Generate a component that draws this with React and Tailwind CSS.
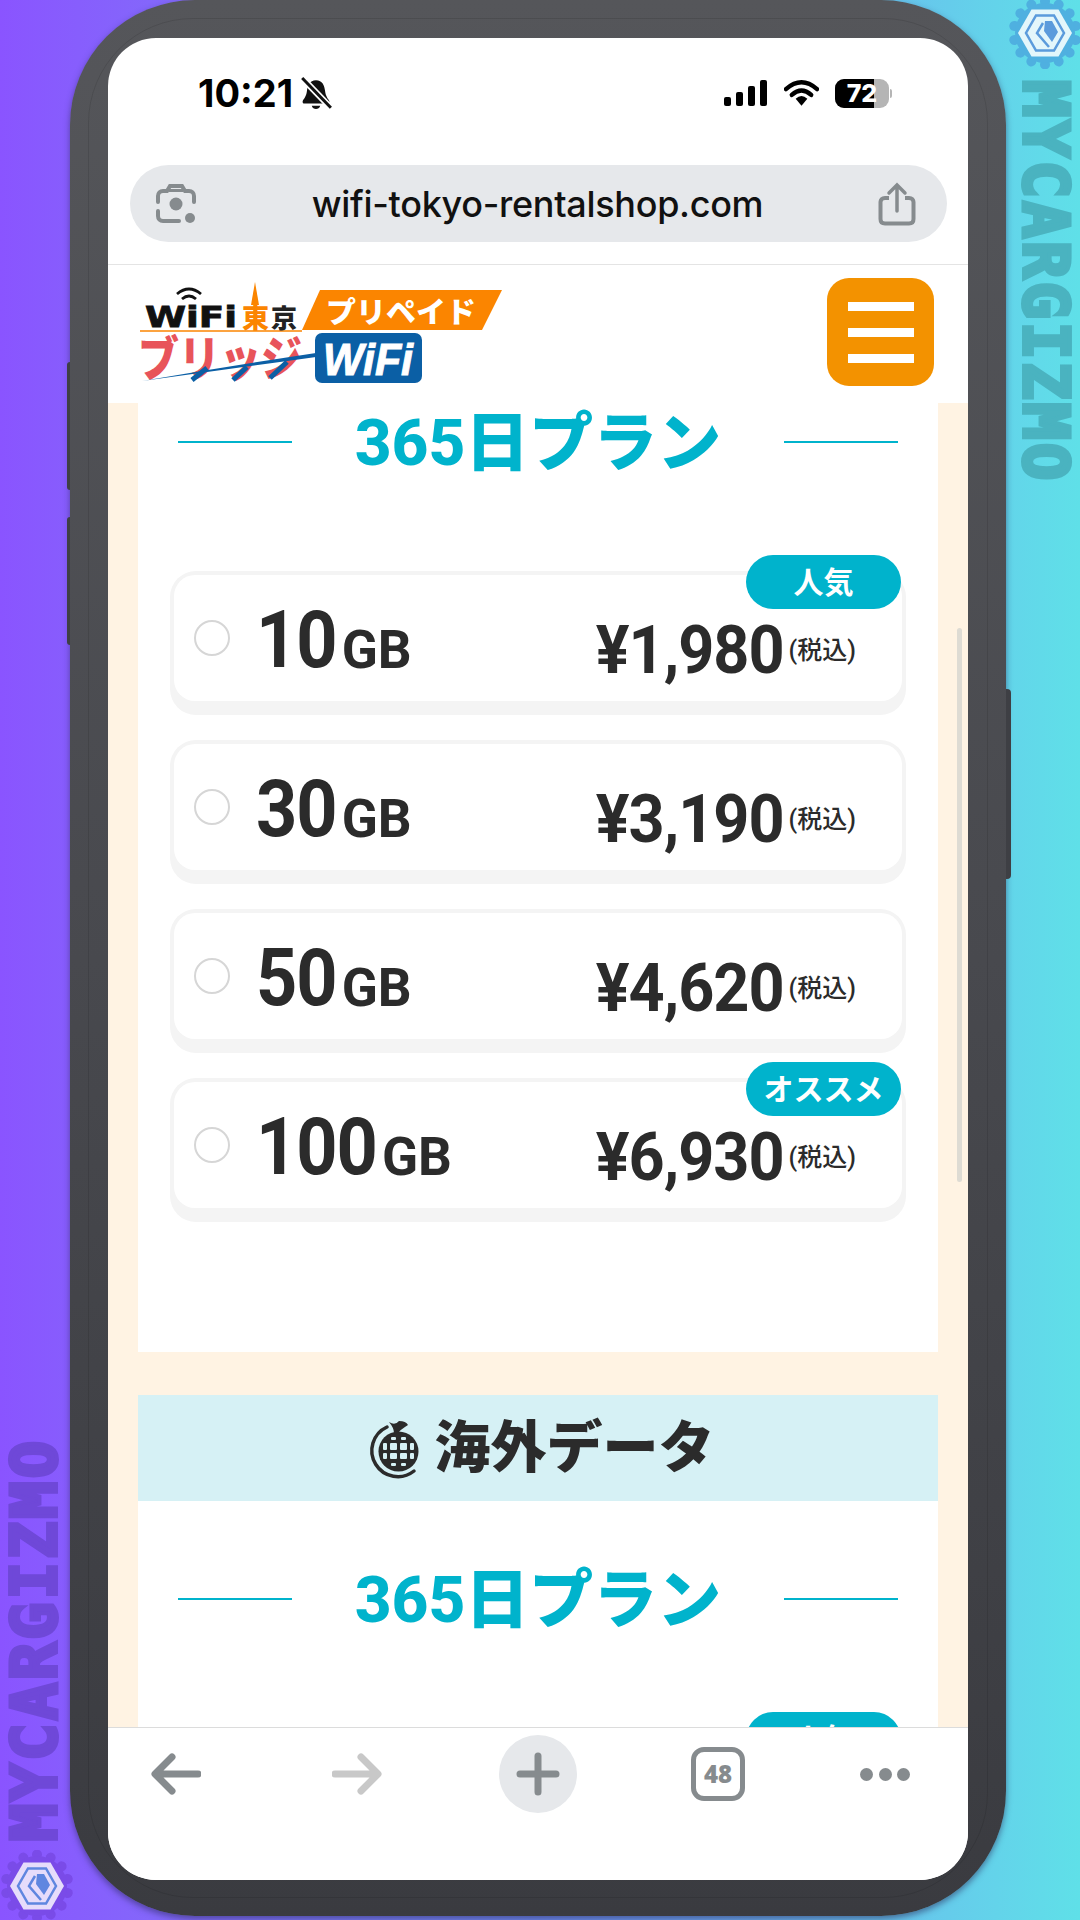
import React from 'react';

function HexBadge({ gear, hex, inner }) {
  const teeth = Array.from({ length: 14 }, (_, i) => (i * 360) / 14);
  return (
    <svg viewBox="0 0 72 72" className="w-[72px] h-[72px]">
      {teeth.map((a) => (
        <circle key={a} cx="36" cy="4.500" r="5" fill={gear} transform={`rotate(${a} 36 36)`} />
      ))}
      <circle cx="36" cy="36" r="30" fill={gear} />
      <path d="M63 36 49.500 12.500H22.500L9 36 22.500 59.500H49.500Z" fill={hex} />
      <path d="M55 36 45 18.500H27L17 36 27 53.500H45Z" fill="none" stroke={inner} strokeWidth="2.500" />
      <path d="M36 24H43L49 35 43 45 35 34Z" fill={inner} />
      <path d="M40 50 28 36 34 26" fill="none" stroke={inner} strokeWidth="2.500" />
    </svg>
  );
}

function Logo() {
  const cjk = "'Noto Sans CJK JP', sans-serif";
  return (
    <svg viewBox="0 0 380 120" className="w-[380px] h-[120px] shrink-0">
      <path d="M190 15H372L352 55H172Z" fill="#fb8500" />
      <path d="M10 56H172" stroke="#fb8500" strokeWidth="1.500" />
      <text x="15" y="52" fontFamily="'DejaVu Sans', sans-serif" fontWeight="700" fontSize="28" textLength="92" lengthAdjust="spacingAndGlyphs" stroke="#111" strokeWidth="0.8" fill="#111">WiFi</text>
      <path d="M47 19Q59 9 71 19M52 24Q59 18 66 24" fill="none" stroke="#111" strokeWidth="2.800" />
      <path d="M125 7 129 30H121Z" fill="#fb8500" />
      <text x="112" y="53" fontFamily={cjk} fontWeight="900" fontSize="27" fill="#fb8500">東</text>
      <text x="141" y="53" fontFamily={cjk} fontWeight="900" fontSize="26" fill="#222">京</text>
      <text x="196" y="48" fontFamily={cjk} fontWeight="900" fontSize="29" textLength="150" lengthAdjust="spacingAndGlyphs" fill="#fff">プリペイド</text>
      <text x="8" y="101" fontFamily={cjk} fontWeight="900" fontSize="48" textLength="164" lengthAdjust="spacingAndGlyphs" fill="#e8545a">ブリッジ</text>
      <path d="M12 106Q100 91 186 78V82Q100 94 12 106Z" fill="#0b5fa5" />
      <path d="M62 105 77 93M103 105 117 92M140 103 157 87" stroke="#0b5fa5" strokeWidth="5" fill="none" />
      <rect x="185" y="58" width="107" height="50" rx="7" fill="#0b5fa5" />
      <text x="193" y="100" fontFamily="'Liberation Sans', sans-serif" fontStyle="italic" fontWeight="700" fontSize="44" textLength="90" lengthAdjust="spacingAndGlyphs" stroke="#fff" strokeWidth="1" fill="#fff">WiFi</text>
    </svg>
  );
}

function Heading() {
  return (
    <div className="h-[78px] flex items-center justify-between px-[40px]">
      <div className="w-[114px] h-[2px] bg-[#00b3cc]" />
      <div className="text-[64px] leading-none font-extrabold text-[#00b3cc] translate-y-[2px]">365日プラン</div>
      <div className="w-[114px] h-[2px] bg-[#00b3cc]" />
    </div>
  );
}

function PlanCard({ gb, price, badge }) {
  return (
    <div className="relative h-[144px] rounded-[26px] bg-[#f4f4f4] pt-[4px] px-[4px] pb-[14px]">
      <div className="h-full rounded-[21px] bg-white flex items-center pl-[20px] pr-[46px]">
        <div className="w-[36px] h-[36px] rounded-full border-2 border-[#d6d6d6] bg-white shrink-0" />
        <div className="flex-1 flex items-baseline ml-[26px] text-[#2b2b2b] font-bold">
          <span className="inline-block origin-[50%_85%] scale-y-[1.11] translate-y-[5px] text-[72px] leading-none tracking-[-1px]">{gb}</span>
          <span className="text-[53px] leading-none ml-[5px] translate-y-[6px]">GB</span>
          <span className="inline-block ml-auto origin-[50%_85%] scale-y-[1.07] translate-y-[11px] text-[63px] leading-none tracking-[-1px]">{price}</span>
          <span className="text-[25px] leading-none font-medium ml-[5px] -translate-y-[3px]">(税込)</span>
        </div>
      </div>
      {badge && (
        <div className="absolute top-[-16px] right-[5px] w-[155px] h-[54px] rounded-full bg-[#00b3cc] text-white text-[30px] font-bold flex items-center justify-center">
          {badge}
        </div>
      )}
    </div>
  );
}

function Plans({ plans }) {
  return (
    <div className="mt-[90px] flex flex-col gap-[25px] px-[32px]">
      {plans.map((p) => (
        <PlanCard key={p.gb} {...p} />
      ))}
    </div>
  );
}

const plans = [
  { gb: '10', price: '¥1,980', badge: '人気' },
  { gb: '30', price: '¥3,190' },
  { gb: '50', price: '¥4,620' },
  { gb: '100', price: '¥6,930', badge: 'オススメ' },
];

function GlobeIcon() {
  const cells = [
    [29, 24, 5, 3], [39, 24, 5, 3],
    [21, 30, 4, 7], [28, 30, 7, 7], [38, 30, 7, 7], [48, 30, 4, 7],
    [21, 40, 4, 6], [28, 40, 7, 6], [38, 40, 7, 6], [48, 40, 4, 6],
    [29, 50, 5, 3], [39, 50, 5, 3],
  ];
  return (
    <svg viewBox="0 0 70 70" className="w-[70px] h-[70px] shrink-0">
      <path d="M25 14A26 26 0 1 0 52 58" fill="none" stroke="#2b2b2b" strokeWidth="3.500" strokeLinecap="round" />
      <path d="M27 9Q33 13 37 8 44 8 46 12 38 17 36 20H32Q32 15 27 9Z" fill="#2b2b2b" />
      <circle cx="36.500" cy="38.500" r="20" fill="#2b2b2b" />
      {cells.map(([x, y, w, h]) => (
        <rect key={`${x}-${y}`} x={x} y={y} width={w} height={h} rx="1" fill="#d6f1f5" />
      ))}
    </svg>
  );
}

export default function App() {
  return (
    <div className="relative w-[1080px] h-[1920px] overflow-hidden bg-gradient-to-r from-[#8a54ff] via-[#6f8cf0] to-[#5fe0e8] pl-[70px] font-[family-name:Roboto,'Noto_Sans_CJK_JP',sans-serif]">
      {/* watermarks */}
      <div className="absolute left-[1020px] top-[80px] [writing-mode:vertical-rl] w-[50px] text-[62px] leading-[50px] font-bold tracking-[3px] text-[#4ab3c0] [-webkit-text-stroke:4px_#4ab3c0] font-[family-name:'DejaVu_Sans_Mono',monospace]">
        MYCARGIZMO
      </div>
      <div className="absolute left-[1009px] top-[-3px]">
        <HexBadge gear="#4fb0e0" hex="#e3f6fb" inner="#5b9bdc" />
      </div>
      <div className="absolute left-[10px] top-[1438px] [writing-mode:vertical-rl] rotate-180 w-[50px] text-[62px] leading-[50px] font-bold tracking-[3px] text-[#6f48d8] [-webkit-text-stroke:4px_#6f48d8] font-[family-name:'DejaVu_Sans_Mono',monospace]">
        MYCARGIZMO
      </div>
      <div className="absolute left-[1px] top-[1850px]">
        <HexBadge gear="#7a4be8" hex="#e6dcfb" inner="#5f86e0" />
      </div>

      {/* phone */}
      <div className="relative w-[936px] h-[1916px] rounded-[125px] bg-gradient-to-b from-[#55565a] via-[#48494e] to-[#3a3b40] pt-[38px] pl-[38px] pr-[38px] pb-[36px] shadow-[0_3px_6px_rgba(40,40,90,0.55)]">
        <div className="absolute inset-[18px] rounded-[105px] border border-black/10" />
        <div className="absolute left-[-3px] top-[362px] w-[3px] h-[128px] bg-[#3e3f44] rounded-l-sm" />
        <div className="absolute left-[-3px] top-[517px] w-[3px] h-[128px] bg-[#3e3f44] rounded-l-sm" />
        <div className="absolute right-[-5px] top-[689px] w-[5px] h-[190px] bg-[#3e3f44] rounded-r-sm" />

        <div className="relative w-full h-full rounded-[48px] overflow-hidden bg-white flex flex-col">
          {/* status bar */}
          <div className="h-[127px] shrink-0 flex items-start pt-[36px] pl-[90px] pr-[76px]">
            <span className="text-[38px] leading-[38px] font-bold text-black font-[family-name:Inter,sans-serif]">10:21</span>
            <svg viewBox="0 0 32 32" className="w-[34px] h-[34px] ml-[6px] mt-[3px]">
              <path d="M16 3C10 3 8 8 7.500 13 7 18 5 20 3.500 22.500 3 24 4 25 5 25H27C28 25 29 24 28.500 22.500 27 20 25 18 24.500 13 24 8 22 3 16 3ZM12 27H20C19 31 13 31 12 27Z" fill="#111" />
              <path d="M3 1 30 29" stroke="#fff" strokeWidth="6" />
              <path d="M3 1 30 29" stroke="#111" strokeWidth="2.800" />
            </svg>
            <div className="ml-auto flex items-center gap-[16px] h-[38px]">
              <svg viewBox="0 0 44 26" className="w-[44px] h-[26px]">
                <rect x="0" y="17" width="7" height="9" rx="2" fill="#000" />
                <rect x="12" y="12" width="7" height="14" rx="2" fill="#000" />
                <rect x="24" y="6" width="7" height="20" rx="2" fill="#000" />
                <rect x="36" y="0" width="7" height="26" rx="2" fill="#000" />
              </svg>
              <svg viewBox="0 0 36 26" className="w-[35px] h-[26px]">
                <path d="M2 9Q18 -5 34 9" fill="none" stroke="#000" strokeWidth="4.500" strokeLinecap="round" />
                <path d="M8 15Q18 6 28 15" fill="none" stroke="#000" strokeWidth="4.500" strokeLinecap="round" />
                <path d="M12 19Q18 13 24 19L18 26Z" fill="#000" />
              </svg>
              <div className="flex items-center">
                <div className="relative w-[54px] h-[29px] rounded-[9px] overflow-hidden bg-[#b5b5b5]">
                  <div className="w-[39px] h-full bg-black" />
                  <span className="absolute inset-0 flex items-center justify-center text-[25px] leading-none font-extrabold text-white font-[family-name:Inter,sans-serif]">72</span>
                </div>
                <div className="w-[2px] h-[9px] ml-[1px] rounded-r-sm bg-[#b5b5b5]" />
              </div>
            </div>
          </div>

          {/* url bar */}
          <div className="ml-[22px] mr-[21px] h-[77px] shrink-0 rounded-full bg-[#e6e8eb] flex items-center pl-[25px] pr-[31px]">
            <svg viewBox="0 0 42 42" className="w-[42px] h-[42px] shrink-0">
              <path d="M3 19V13C3 10 5 8 8 8H12L15 3H27L30 8H34C37 8 39 10 39 13V19" fill="none" stroke="#868b8e" strokeWidth="4" strokeLinecap="round" />
              <path d="M14 6H28V9H14Z" fill="#868b8e" />
              <path d="M3 28V33C3 36 5 38 8 38H24" fill="none" stroke="#868b8e" strokeWidth="4" strokeLinecap="round" />
              <circle cx="21" cy="21" r="6.500" fill="#868b8e" />
              <circle cx="35" cy="35" r="5" fill="#868b8e" />
            </svg>
            <div className="flex-1 text-center text-[36px] leading-none font-medium text-[#111] font-[family-name:Inter,sans-serif] tracking-[-0.3px]">wifi-tokyo-rentalshop.com</div>
            <svg viewBox="0 0 38 44" className="w-[38px] h-[44px] shrink-0">
              <path d="M11 16H7C4 16 2.500 18 2.500 20V37C2.500 40 4 41.500 7 41.500H31C34 41.500 35.500 40 35.500 37V20C35.500 18 34 16 31 16H27" fill="none" stroke="#868b8e" strokeWidth="4" />
              <path d="M19 29V4M11 11 19 3 27 11" fill="none" stroke="#868b8e" strokeWidth="3.500" strokeLinecap="round" />
            </svg>
          </div>

          <div className="mt-[22px] h-[1px] shrink-0 bg-[#e4e4e4]" />

          {/* site header */}
          <div className="h-[138px] shrink-0 flex items-start pl-[22px] pr-[34px] pt-[10px]">
            <Logo />
            <div className="ml-auto mt-[3px] w-[107px] h-[108px] rounded-[22px] bg-[#f39200] flex flex-col items-center justify-center gap-[17px]">
              <div className="w-[66px] h-[9px] bg-white" />
              <div className="w-[66px] h-[9px] bg-white" />
              <div className="w-[66px] h-[9px] bg-white" />
            </div>
          </div>

          {/* page */}
          <div className="relative flex-1 min-h-0 overflow-hidden bg-[#fff3e3] px-[30px]">
            <div className="bg-white pb-[130px]">
              <Heading />
              <Plans plans={plans} />
            </div>
            <div className="mt-[43px] h-[106px] bg-[#d6f1f5] flex items-center justify-center gap-[3px]">
              <GlobeIcon />
              <span className="text-[56px] leading-none font-black text-[#2b2b2b]">海外データ</span>
            </div>
            <div className="bg-white pt-[59px] pb-[40px]">
              <Heading />
              <Plans plans={plans.slice(0, 1)} />
            </div>
            <div className="absolute right-[6px] top-[225px] w-[5px] h-[554px] rounded-full bg-[#dedbd3]" />
          </div>

          {/* browser toolbar */}
          <div className="h-[153px] shrink-0 border-t border-[#dcdcdc] bg-white flex items-start pt-[7px] pl-[29px]">
            <div className="w-[78px] h-[78px] flex items-center justify-center">
              <svg viewBox="0 0 50 44" className="w-[50px] h-[44px]">
                <path d="M47 22H5M21 5 4 22 21 39" fill="none" stroke="#868b8e" strokeWidth="7" strokeLinecap="round" strokeLinejoin="round" />
              </svg>
            </div>
            <div className="ml-[103px] w-[78px] h-[78px] flex items-center justify-center">
              <svg viewBox="0 0 50 44" className="w-[50px] h-[44px]">
                <path d="M3 22H45M29 5 46 22 29 39" fill="none" stroke="#c8c8c8" strokeWidth="7" strokeLinecap="round" strokeLinejoin="round" />
              </svg>
            </div>
            <div className="ml-[103px] w-[78px] h-[78px] rounded-full bg-[#e6e8eb] flex items-center justify-center">
              <svg viewBox="0 0 44 44" className="w-[44px] h-[44px]">
                <path d="M22 4V40M4 22H40" fill="none" stroke="#868b8e" strokeWidth="7" strokeLinecap="round" />
              </svg>
            </div>
            <div className="ml-[102px] w-[78px] h-[78px] flex items-center justify-center">
              <div className="w-[54px] h-[54px] rounded-[13px] border-[5px] border-[#868b8e] flex items-center justify-center text-[24px] leading-none font-extrabold text-[#868b8e] font-[family-name:'Open_Sans',sans-serif]">48</div>
            </div>
            <div className="ml-[103px] w-[50px] h-[78px] flex items-center justify-between">
              <div className="w-[13px] h-[13px] rounded-full bg-[#868b8e]" />
              <div className="w-[13px] h-[13px] rounded-full bg-[#868b8e]" />
              <div className="w-[13px] h-[13px] rounded-full bg-[#868b8e]" />
            </div>
          </div>
        </div>
      </div>
    </div>
  );
}
